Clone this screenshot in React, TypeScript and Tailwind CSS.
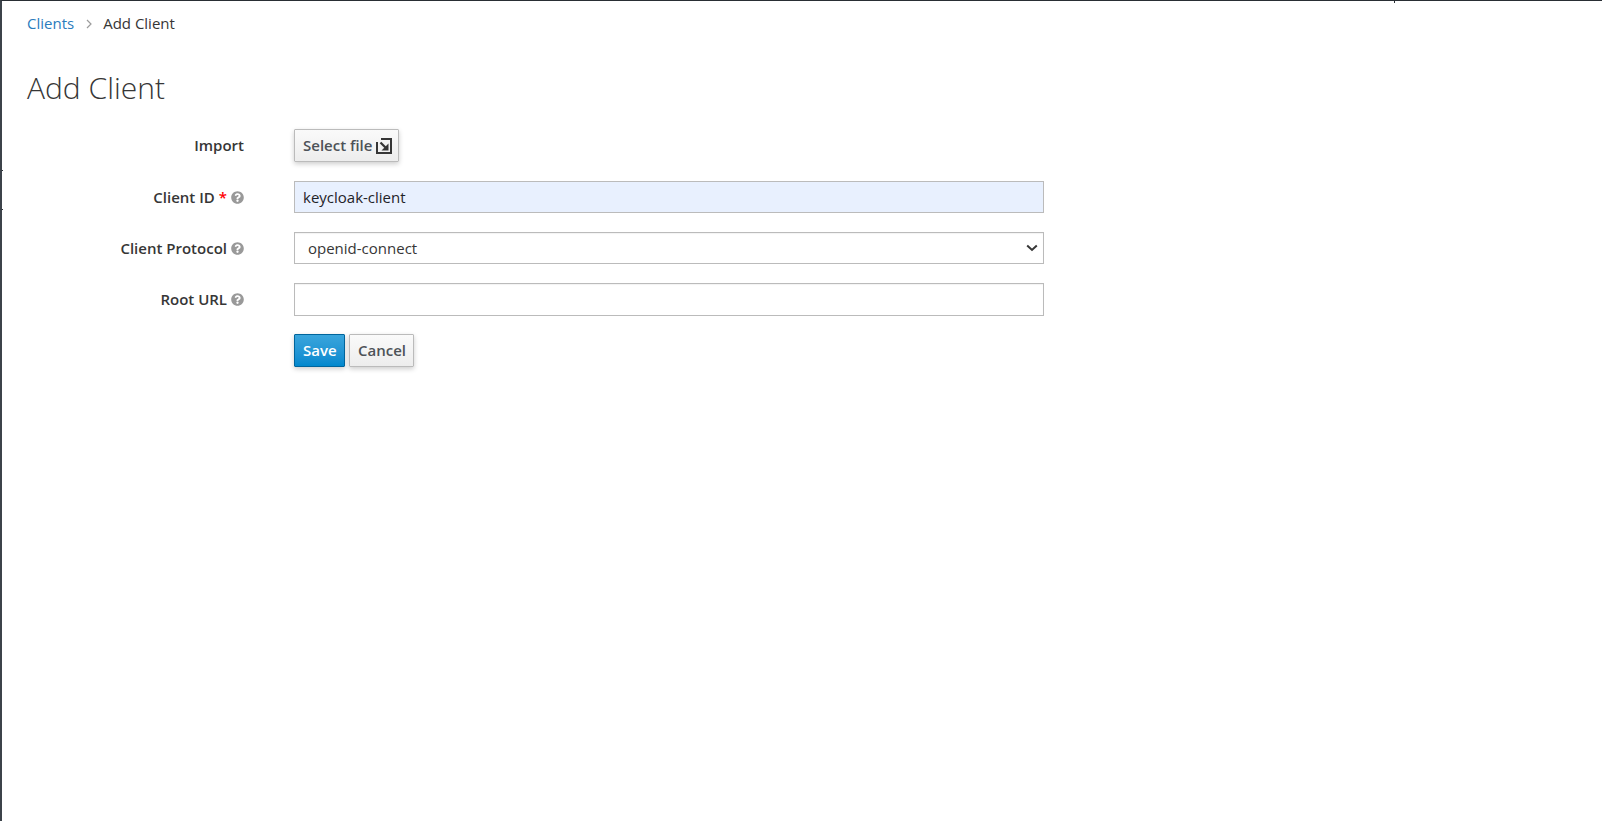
import { FaQuestionCircle } from "react-icons/fa";

function HelpIcon() {
  return <FaQuestionCircle className="ml-[4px] inline-block shrink-0 text-[#999999]" size={13} />;
}

function ImportIcon() {
  return (
    <svg width="16" height="16" viewBox="0 0 16 16" className="ml-[4px] shrink-0 text-[#363636]" aria-hidden="true">
      <path d="M1 4v11h14V1H5" fill="none" stroke="currentColor" strokeWidth="2" />
      <path d="M4.5 4.5l6.5 6.5" fill="none" stroke="currentColor" strokeWidth="2.2" />
      <path d="M12.5 5.5v7h-7z" fill="currentColor" />
    </svg>
  );
}

function Row({ label, children, hint = true, required = false }: { label: string; children: React.ReactNode; hint?: boolean; required?: boolean }) {
  return (
    <div className="flex items-center">
      <div className="flex w-[242px] shrink-0 items-center justify-end text-[15px] font-semibold text-[#363636]">
        {label}
        {required && <span className="ml-[4px] text-[#ff0000]">*</span>}
        {hint && <HelpIcon />}
      </div>
      <div className="ml-[50px] flex-1">{children}</div>
    </div>
  );
}

const btn =
  "flex items-center rounded-[1px] border border-[#bbbbbb] bg-gradient-to-b from-[#fafafa] to-[#ededed] pl-2 text-[15px] font-semibold text-[#4d5258] shadow-[0_2px_5px_rgba(0,0,0,0.2)]";

export default function App() {
  return (
    <div className="relative h-[821px] w-[1602px] overflow-hidden border-t border-l-2 border-t-[#292e34] border-l-[#3c434a] bg-white font-['Open_Sans',sans-serif]">
      {/* little marks left on the frame */}
      <div className="absolute top-0 left-[1392px] h-[2px] w-px bg-[#292e34]" />
      <div className="absolute top-[76px] -left-[2px] h-px w-[2px] bg-white" />
      <div className="absolute top-[169px] -left-[2px] h-px w-[3px] bg-[#292e34]" />
      <div className="absolute top-[208px] -left-[2px] h-px w-[3px] bg-[#292e34]" />

      <nav className="flex h-[45px] items-center pl-[25px] text-[15px]">
        <a className="text-[#2b7cbd]">Clients</a>
        <svg width="7" height="10" viewBox="0 0 7 10" className="mr-[10px] ml-[12px] text-[#9c9c9c]" aria-hidden="true">
          <path d="M1 1l4 4-4 4" fill="none" stroke="currentColor" strokeWidth="1.2" />
        </svg>
        <span className="text-[#363636]">Add Client</span>
      </nav>
      <h1 className="pl-[25px] pt-[25px] text-[30px] leading-[34px] font-light text-[#363636]">Add Client</h1>
      <form className="mt-[24px] flex w-[1042px] flex-col gap-[19px]">
        <Row label="Import" hint={false}>
          <button type="button" className={`${btn} h-[33px] w-[105px]`}>
            Select file
            <ImportIcon />
          </button>
        </Row>
        <Row label="Client ID" required>
          <input
            readOnly
            value="keycloak-client"
            className="block h-[32px] w-full border border-[#bbbbbb] bg-[#e8f0fe] px-[8px] text-[15px] text-[#1f2328] outline-none"
          />
        </Row>
        <Row label="Client Protocol">
          <div className="flex h-[32px] w-full items-center justify-between border border-[#bbbbbb] bg-white pr-[5px] pl-[13px] text-[15px] text-[#363636] shadow-[inset_0_1px_1px_rgba(0,0,0,0.05)]">
            openid-connect
            <svg width="12" height="8" viewBox="0 0 12 8" className="text-[#363636]" aria-hidden="true">
              <path d="M1.2 1.5L6 6l4.8-4.5" fill="none" stroke="currentColor" strokeWidth="2" />
            </svg>
          </div>
        </Row>
        <Row label="Root URL">
          <input readOnly className="block h-[33px] w-full border border-[#bbbbbb] bg-white px-[8px] text-[15px] outline-none shadow-[inset_0_1px_1px_rgba(0,0,0,0.05)]" />
        </Row>
        <div className="-mt-px ml-[292px] flex gap-[4px]">
          <button type="button" className="h-[33px] w-[51px] rounded-[1px] border border-[#00659c] bg-gradient-to-b from-[#39a5dc] to-[#0088ce] pl-2 text-left text-[15px] font-semibold text-white shadow-[0_2px_5px_rgba(0,0,0,0.2)]">
            Save
          </button>
          <button type="button" className={`${btn} h-[33px] w-[65px]`}>
            Cancel
          </button>
        </div>
      </form>
    </div>
  );
}
